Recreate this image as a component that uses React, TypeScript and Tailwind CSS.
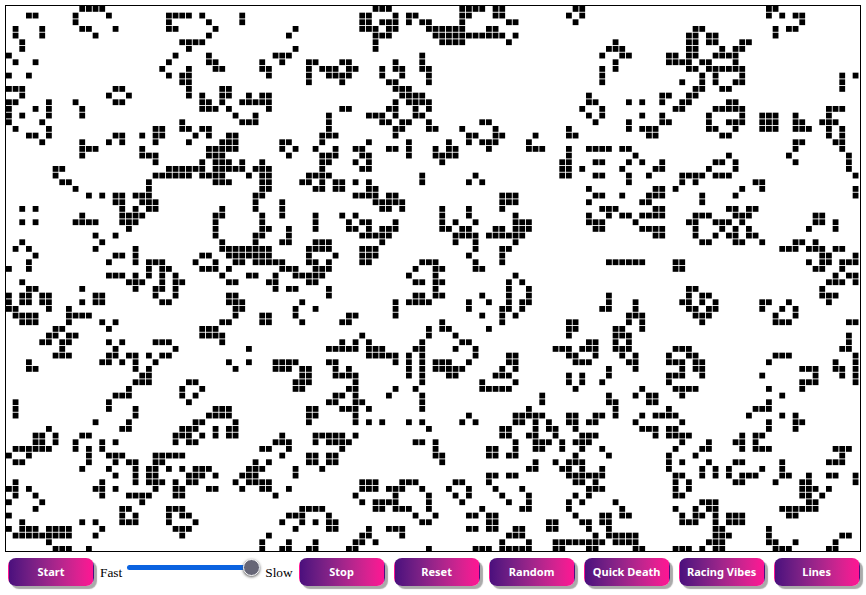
import React from "react";

// live cells per row, "a-b" is a run of columns
const ROWS = [
  "11-14 55-57 68-71 73 74 85 86 114 115",
  "3 4 10 15 24-27 29 35 53 54 58 60 61 68 69 73 74 84 86 114 116 118 119",
  "10 24 30 35 53 54 56-58 60 62 63 68 75 76 85 119",
  "1 5 11 12 16 24 25 31 43 53-55 57 58 63-68 72 73 103 104 115 117 118",
  "1 5 13 30 42 55-57 64-74 76 102 103 105 106 115",
  "2 26-29 55 65-68 75 91 102 103 105 106 110 111",
  "2 27 43 55 90-92 102 103 107 109 110",
  "0 25 30 40-42 62 89 92 93 99 100 102 103 106-109",
  "1 4 24 30 31 38 41 45 46 50 51 58 62 91 99-102 104 105 109",
  "23 27 31 32 38 39 45 47-49 51 52 56 58 59 62 63 89 91 102 103 105-110",
  "0 3 24 26 27 39 45 48-51 56 59 63 89 104 106 110 125 127",
  "26 27 45 50 57 58 63 89 101 104 106 109 110 125",
  "0-2 16 17 27 32 33 58-60 103 104 107 108 125",
  "2 15 18 27 29 32 33 36 38 39 59-62 87 98 99 102 103",
  "0 1 6 10 16 17 29 30 32 35-39 58 60-63 87 88 93 95 98 101 102 108 109",
  "0 4 6 11 29-31 33 39 50 51 57 58 61 63 86 89 100 101 106-110 123-125",
  "0 2 6 11 34 37 48 54-56 58 61 62 87 89 95 98 105 110 113-115 118 123",
  "0 5 26 35-37 48 56 57 59 60 63 71 72 88 93 98 99 105 108-110 113-115 118 119 122-124",
  "1 6 22 23 26 27 29 30 48 58 59 63 64 68 73 84 93 95-97 105 106 109 113-115 118-120 123 125",
  "3 4 6 16 17 20 22 23 28 30 33 34 47-49 58 69 70 73 74 79 84 85 96 97 107 108 123 125",
  "5 11 15 17 22 27 32-34 41 42 47 54 60 66 69 71-73 78 118 119 124 125",
  "11-13 20 30-34 41 43 46 49 52 53 57 58 60 64 66 67 72 78-80 84 87-90 92 93 118 125",
  "11 20-22 30-32 42 47-49 53 54 60 64-67 84 94 108 117 126",
  "22 29 31-33 35 38 47 48 52 54 65 83 84 88 89 93 95 98 106 107 109 118 126",
  "7 8 24-29 31-35 37-39 47 53 54 83 84 86 92 97 98 105 109 126",
  "7 22-27 29-32 36 38 39 45-48 62 70 83 84 88 89 93 96 101-104 106-108 127",
  "8 9 21 31-33 38 39 44 45 47 49 50 52 54 62 69 71 93 101 103 112 113",
  "10 21 38 39 46 47 49 50 54 55 87 97 98 100 110 113 127",
  "12 14 16 17 19-21 37 38 52-55 57 58 74-76 88 89 92 96-98 104 109 127",
  "16 17 20-22 37 41 55-59 74-76 87 95 96 104",
  "2 4 17 19 21 22 32 37 41 56 57 59 65 69 74 89-91 97 98 108 109 111 112",
  "11 17-20 31 32 38 41 46 50 52 65 69 76 87 90 92 93 95-98 103-105 109-111 121 122",
  "2 4 10-13 17-19 31 38 46 51 53 54 58 65 67 70 76-78 87-89 94 102 103 106-108 110 121 122 124",
  "18 31 38 39 42 46 51 52 54 56-58 65 66 68 69 73 74 76-78 88 89 95-98 103 107 109 111 120 124",
  "13 16 31 37 38 42 53-57 67-70 72-77 97 98 103 106 108 109 111 112",
  "2 14 32 37 41 42 46-48 56 67 70 76 104 105 109 110 113 118 119 121",
  "1 3 13 19 32-39 45-48 53-55 70 74 75 116-118 120-122 124 125",
  "4 16 17 19 29 30 33-39 45 49 53-55 69 74 122 123 127",
  "3 15 19 21-23 28 31 34 35 37-41 45 46 48 53 54 62-64 70 74 90-95 100 101 120 122 123 125-127",
  "0 3 21 23 24 29-31 33 41-43 46-48 61 64 65 70 71 100 101 121 122 125",
  "15-17 19 21 23 25 32 36 37 40 43-47 60 64 76 124 126 127",
  "2 18-20 23 25 26 33 34 39 40 45 46 61 62 64 65 75 77 123-125 127",
  "3 4 11 19 22 23 25 40 42 43 48 64 75 78 102 103 122",
  "0 2 3 5 6 13 14 22 25 33 34 48 61 62 64 65 71 75 78 90 102 104 105 122-124",
  "0 2 3 5 6 11 13 14 23 24 33-35 44 58 60-63 69 72 75 77 78 90 94 101 102 104 106 113 114 117 123",
  "0 1 6 9 34 35 43 46 58 69 74 75 77 89 90 94 102 103 105 106 113 116 118",
  "1-4 9-12 34 38 39 43 51 52 58 71 74 76 93-95 103-105 115 118",
  "2-4 9 14 16 32 33 38 39 44 50 51 65 74 84 85 93 95 104 115-117 126 127",
  "7 8 15 29-31 63 65 66 72 84 85 91 92 95",
  "6 7 9 10 29-32 53 63 67 84 91-93 126",
  "5 6 8 9 15 17 22-24 32 50 52 54 62 68 69 87 88 91 93 126",
  "8 16 25 36 48-52 54-56 61 62 67 70 82-84 86-88 91-93 100-102 125 126",
  "7-9 15 16 18 19 21 23 24 54-58 60 62 70 75 76 84 85 88 92 94 99 102 103 115-117 127",
  "3 14 15 17 19 22 33 36 40-43 48 49 58 60 62 64-66 69 75 76 85-87 93 94 99-101 103 104 114 124 127",
  "3 4 19 21 34 40-42 44 45 49 51 60 62 64-68 74 76 90 94 101 103 104 119-121 124 125 127",
  "20 21 44 45 49-52 60 62 66 67 73-75 84 86 90 99-101 104 113 121 125 127",
  "19-21 27 28 43-45 52 62 71 76 84 86 89 99 119-121 127",
  "18 26 29 43 44 51 52 58 61 71-75 85 95 100-103 114 119",
  "16-18 26 28 49 50 52 57 62 80 90 94 96 97 101 116",
  "1 15 27 48 49 52 53 62 80 90 91 96 97 114",
  "1 15 19 31-33 45 46 50-52 54 62 78 91 99 112-114",
  "1 19 30-33 45 46 52 69 76-80 84 85 88 89 91 95 97-100 111 116 118",
  "13 18 28 29 34 45 52 54 56 60 62 68 70 76 77 79 81 84 85 87 88 94 101 114 118 119",
  "6 17 18 26-28 31 33 34 63 74 75 79 81 82 85 95-97 99 100 114 118",
  "4 5 7 11 12 25-27 29 31 33 34 41 46-50 52 74 75 78 79 82 86-88 97 99-102 110 112 113",
  "4 5 7 10 14 16 25 27 28 40-42 46 48-51 61 62 64 76 79-81 83 85-87 101 105 109 110 112",
  "1-6 10 12 14 38 39 42 50 64 72 73 76 79 80 83 86 89 100 104 105 110 112-114 124-126",
  "0 3 12 15-17 22-26 41 45 46 48 49 64 65 72 73 75 76 85 90 99 103 125",
  "1 2 12 16 18 19 22 23 37 39 45 46 48 49 65 79 82 84-86 99 101 105 109 110 116 123-125",
  "11 15 19 21 22 24 26 28-30 36-38 43 47 78 79 83 84 86 89 99 104 106 108 113 116",
  "16 19 21 22 27-29 31 35-37 43 72 73 75 76 84-89 100 101 104 106 108 110-112 116 117 120 123 124 127",
  "1 14 19 21-23 25 27 28 34 36-39 53-55 59-61 67 68 72 85 86 88 100 102 109 110 115 119 120 127",
  "0 1 3 13 14 16 22 25 26 30 31 35 38 39 42 53-55 57-59 62 66 69 73 77 87-89 100 102 119-121 123",
  "1 4 14 18-21 25 26 40 52 58 63 67 69 74 78 85 87 100 101 119 120 122",
  "0 5 20 53 55-58 63 68 75 78 84 86 91 104-106 120 121",
  "4 17 18 24-26 44-47 55 56 58-60 63 71 77 78 84 92 100 103 105 106 116-121",
  "0 17 19 24 26 27 42-44 48 61 64 69 70 72 73 85 89 90 92 93 101 103 104 106 108-110 117 118",
  "2 11 13 17-19 24 28 41 44 46 48 49 62 63 72 73 81 82 86 87 89 90 101-103 106 108-110",
  "0 2-4 6-9 14 25-27 43 48 49 54 57-59 69 70 72 73 76 77 81 82 87 90 106 107 114",
  "1-9 13 26 39 53 54 59 75-77 88 90-94 106-108 114 125 126",
  "6 38 42 46 52 53 55 74 78 82-89 91-94 105-107 114 115 118 124",
  "7-9 12 38 41 42 45 46 51 52 63 70-72 74-78 82 83 87 88 94 95 100-102 104 106 107 115-117 123 124",
];

const PITCH = 20 / 3;

function parseRow(row: string): number[] {
  const cols: number[] = [];
  for (const part of row.split(" ")) {
    const [from, to] = part.split("-").map(Number);
    for (let c = from; c <= (to ?? from); c++) cols.push(c);
  }
  return cols;
}

function Board() {
  return (
    <div className="ml-[5px] mt-[5px] h-[547px] w-[856px] overflow-hidden border border-black bg-white">
      <svg width="854" height="545">
        {ROWS.map((row, r) =>
          parseRow(row).map((c) => (
            <rect key={`${r}-${c}`} x={c * PITCH} y={r * PITCH} width={5.8} height={5.8} fill="#000" />
          ))
        )}
      </svg>
    </div>
  );
}

function GameButton({ label }: { label: string }) {
  return (
    <button className="h-[28px] w-[86px] rounded-lg border border-transparent bg-gradient-to-r from-[#4b0f7d] to-[#ff1493] pt-px text-center font-['Noto_Sans'] text-[11px] font-bold text-white shadow-[3px_3px_1px_#aaaaaa]">
      {label}
    </button>
  );
}

export default function App() {
  return (
    <div className="h-[595px] w-[866px] overflow-hidden bg-white">
      <Board />

      {/* Controls */}
      <div className="mt-[6px] flex items-center pl-[8px]">
        <GameButton label="Start" />
        <span className="ml-[6px] pt-px font-['Liberation_Serif'] text-[13.33px] text-black">Fast</span>
        <div className="relative ml-[5px] mt-[-9px] h-[5px] w-[133px] rounded-full bg-[#0b63e0]">
          <div className="absolute right-0 top-[-6px] h-[17px] w-[17px] rounded-full border border-white bg-[#666677] shadow-[0_1px_3px_#555]" />
        </div>
        <span className="ml-[5px] pt-px font-['Liberation_Serif'] text-[13.33px] text-black">Slow</span>
        <div className="ml-[6px] flex gap-[9px]">
          <GameButton label="Stop" />
          <GameButton label="Reset" />
          <GameButton label="Random" />
          <GameButton label="Quick Death" />
          <GameButton label="Racing Vibes" />
          <GameButton label="Lines" />
        </div>
      </div>
    </div>
  );
}
